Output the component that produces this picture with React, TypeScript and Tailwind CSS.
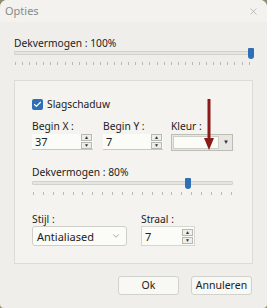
import { Check, ChevronDown, X } from "lucide-react";

function Ticks({ count }: { count: number }) {
  return (
    <div className="flex justify-between px-[1px]">
      {Array.from({ length: count }).map((_, i) => (
        <span key={i} className="h-[3px] w-px bg-[#b9b9b4]" />
      ))}
    </div>
  );
}

function Slider({ pos, ticks, className }: { pos: number; ticks: number; className: string }) {
  return (
    <div className={className}>
      <div className="relative h-[11px]">
        <div className="absolute inset-x-0 top-[3px] h-[4px] rounded-[1px] border border-[#d2d2cc] bg-[#e6e6e1]" />
        <div
          className="absolute top-0 h-[11px] w-[6px] rounded-t-[1px] rounded-b-[3px] bg-[#2f6fb5]"
          style={{ left: pos }}
        />
      </div>
      <div className="mt-[3px]">
        <Ticks count={ticks} />
      </div>
    </div>
  );
}

function Spin() {
  return (
    <div className="flex flex-col gap-[1px] pr-[1px]">
      <span className="flex h-[7px] w-[11px] items-center justify-center border border-[#b8b8b3] bg-[#eeeeea] text-[5px] leading-none text-[#333]">
        ▲
      </span>
      <span className="flex h-[7px] w-[11px] items-center justify-center border border-[#b8b8b3] bg-[#eeeeea] text-[5px] leading-none text-[#333]">
        ▼
      </span>
    </div>
  );
}

function NumField({ value, width }: { value: string; width: string }) {
  return (
    <div className={`flex h-[16px] items-center justify-between border-b border-[#c9c9c3] bg-[#fbfbf7] pl-[3px] ${width}`}>
      <span className="text-[11px] leading-none text-[#222]">{value}</span>
      <Spin />
    </div>
  );
}

export default function App() {
  return (
    <div className="h-[308px] w-[267px] bg-[#8f8c72] font-['Noto_Sans','Open_Sans',sans-serif] text-[10.25px] text-[#222]">
      <div className="flex h-full flex-col rounded-t-[7px] rounded-b-[4px] bg-[#efeeea]">
        <div className="flex h-[22px] items-center justify-between rounded-t-[7px] bg-[#f3f2ee] pl-[5px] pr-[8px]">
          <span className="text-[11px] text-[#8a8a86]">Opties</span>
          <X className="h-[11px] w-[11px] text-[#9a9a96]" strokeWidth={1.3} />
        </div>

        <div className="px-[14px] pt-[16px]">
          <div className="leading-[10px]">Dekvermogen : 100%</div>
          <Slider pos={234} ticks={34} className="mt-0 pr-[2px]" />
        </div>

        <div className="mx-[14px] mt-[15px] h-[184px] border border-[#dcdcd6] bg-[#f4f3ef] px-[17px] pt-[18px]">
          <div className="flex items-center gap-[4px]">
            <span className="flex h-[11px] w-[11px] items-center justify-center rounded-[2px] bg-[#2f6fb5]">
              <Check className="h-[9px] w-[9px] text-white" strokeWidth={3} />
            </span>
            <span className="leading-none">Slagschaduw</span>
          </div>

          <div className="mt-[9px] flex">
            <div className="flex flex-col gap-[1px]">
              <span className="leading-[14px]">Begin X :</span>
              <NumField value="37" width="w-[61px]" />
            </div>
            <div className="ml-[10px] flex flex-col gap-[1px]">
              <span className="leading-[14px]">Begin Y :</span>
              <NumField value="7" width="w-[60px]" />
            </div>
            <div className="relative ml-[8px] flex flex-col gap-[1px]">
              <span className="leading-[14px]">Kleur :</span>
              <div className="flex h-[17px] w-[62px] border border-[#bdbdb7] bg-[#e7e7e2]">
                <div className="m-[1px] flex-1 border border-[#cfcfc9] bg-[#fcfcf6]" />
                <div className="flex w-[12px] items-center justify-center text-[6px] text-[#333]">▼</div>
              </div>
              <svg className="absolute left-[33px] top-[-20px]" width="10" height="52" viewBox="0 0 10 52">
                <rect x="3.5" y="0" width="3" height="42" fill="#8b1a1a" />
                <polygon points="0,39 10,39 5,51" fill="#8b1a1a" />
              </svg>
            </div>
          </div>

          <div className="mt-[15px] leading-[12px]">Dekvermogen : 80%</div>
          <Slider pos={153} ticks={21} className="mt-0 pr-[2px]" />

          <div className="mt-[17px] flex gap-[14px]">
            <div className="flex flex-col">
              <span className="leading-[14px]">Stijl :</span>
              <div className="flex h-[20px] w-[95px] items-center justify-between rounded-[3px] border border-[#cfcfc9] bg-[#fbfbf8] pl-[4px] pr-[5px]">
                <span className="text-[11px] leading-none">Antialiased</span>
                <ChevronDown className="h-[10px] w-[10px] text-[#777]" strokeWidth={1.5} />
              </div>
            </div>
            <div className="flex flex-col">
              <span className="leading-[14px]">Straal :</span>
              <div className="flex h-[20px] w-[54px] items-center justify-between border border-[#d6d6d0] bg-[#fbfbf7] pl-[3px]">
                <span className="text-[11px] leading-none">7</span>
                <Spin />
              </div>
            </div>
          </div>
        </div>

        <div className="mt-[12px] flex justify-end gap-[12px] pr-[15px]">
          <button className="h-[19px] w-[61px] rounded-[3px] border border-[#d2d2cc] bg-[#f8f8f5] text-[10.5px] leading-none">
            Ok
          </button>
          <button className="h-[19px] w-[61px] rounded-[3px] border border-[#d2d2cc] bg-[#f8f8f5] text-[10.5px] leading-none">
            Annuleren
          </button>
        </div>
      </div>
    </div>
  );
}
